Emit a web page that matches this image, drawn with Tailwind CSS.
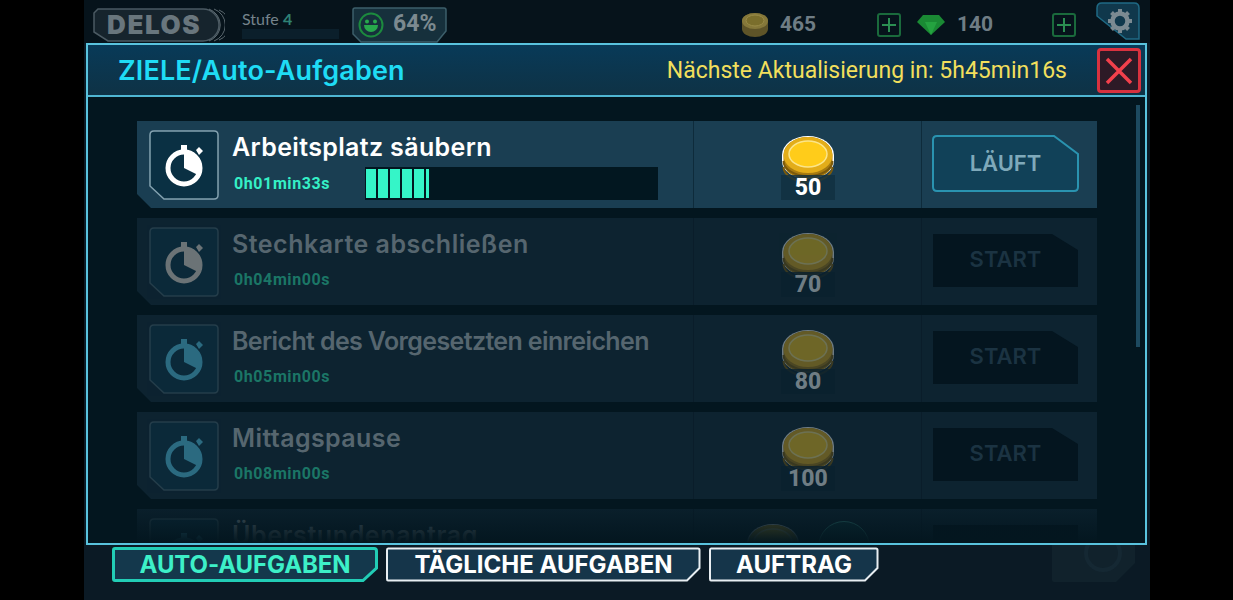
<!DOCTYPE html>
<html lang="de">
<head>
  <meta charset="UTF-8">
  <meta name="viewport" content="width=device-width, initial-scale=1.0">
  <title>Ziele / Auto-Aufgaben</title>
  <script src="https://cdn.jsdelivr.net/npm/@tailwindcss/browser@4"></script>
</head>
<body class="bg-black w-[1233px] h-[600px] overflow-hidden font-[Inter]">
  <!-- shared icons -->
  <svg class="hidden">
    <symbol id="watch" viewBox="0 0 70 70">
      <path d="M1 5 Q1 1 5 1 H65 Q69 1 69 5 V65 Q69 69 65 69 H15 L1 56 Z" fill="#0a3043" stroke="currentColor" stroke-opacity=".75" stroke-width="1.5"/>
    </symbol>
    <symbol id="stopwatch" viewBox="0 0 70 70">
      <circle cx="35" cy="38" r="16" fill="none" stroke="currentColor" stroke-width="5"/>
      <path d="M35 38 V20 A18 18 0 0 1 51 46 Z" fill="currentColor"/>
      <path d="M32 15 H38 V22 H32 Z M47 20 L50 17 L54 21 L50 25 Z" fill="currentColor"/>
    </symbol>
    <symbol id="coin" viewBox="0 0 54 56">
      <path d="M1 20 A26 19 0 0 1 53 20 V26 A26 18 0 0 1 1 26 Z" fill="#fff"/>
      <path d="M2.5 20 A24.5 18 0 0 1 51.5 20 V28 A24.5 16 0 0 1 2.5 28 Z" fill="#a87c10"/>
      <path d="M2.5 26 A24.5 15 0 0 0 51.5 26 M2.5 32 A24.5 15 0 0 0 51.5 32" fill="none" stroke="#7b5a0c" stroke-width="2"/>
      <ellipse cx="27" cy="20" rx="24.5" ry="18" fill="#e3ad19"/>
      <ellipse cx="27" cy="19" rx="19" ry="13" fill="#ffcc1a" stroke="#fbe58a" stroke-width="1.5"/>
    </symbol>
    <symbol id="plus" viewBox="0 0 24 24">
      <rect x="1" y="1" width="22" height="22" rx="2" fill="none" stroke="#1a6a3c" stroke-width="2"/>
      <path d="M12 5 V19 M5 12 H19" stroke="#2b8f52" stroke-width="2"/>
    </symbol>
  </svg>

  <div class="relative ml-[84px] w-[1066px] h-[600px] bg-[#0b1a25] overflow-hidden">
    <!-- dim button behind the panel -->
    <svg class="absolute left-[968px] top-[535px] w-[83px] h-[47px]" viewBox="0 0 83 47" fill="none">
      <path d="M0 0 H83 V28 L64 47 H2 Q0 47 0 45 Z" fill="#11222c"/>
      <circle cx="51" cy="18" r="17" stroke="#152833" stroke-width="4"/>
    </svg>

    <!-- top bar -->
    <div class="h-[43px] flex items-center pt-[6px] bg-[#06131b] relative">
      <div class="relative ml-[9px] mt-[1px] w-[132px] h-[35px]">
        <svg class="absolute inset-0" viewBox="0 0 132 35" fill="none">
          <path d="M1 5 L5 1 H110 A16 16 0 0 1 110 33 H15 L1 24 Z" fill="#16242d" stroke="#4b5a63" stroke-width="1.5"/>
          <path d="M116 1 A17 17 0 0 1 116 33 M121 1 A17 17 0 0 1 121 33 M126 2 A16 16 0 0 1 126 32" stroke="#5b686f" stroke-width="1"/>
        </svg>
        <span class="absolute left-[14px] top-[4px] text-[26px] leading-[26px] font-black tracking-[1.6px] text-[#69767d]">DELOS</span>
      </div>
      <div class="ml-[17px] w-[97px] -mt-[1px]">
        <div class="text-[16px] leading-[18px] text-[#75838b] font-[Lato]">Stufe <span class="font-bold text-[#2f8275]">4</span></div>
        <div class="h-[10px] mt-[1px] bg-[#0b1f2b]"></div>
      </div>
      <div class="relative ml-[13px] w-[95px] h-[36px] flex items-center">
        <svg class="absolute inset-0" viewBox="0 0 95 36" fill="none"><path d="M3 1 H92 Q94 1 94 3 V24 L85 35 H9 L1 27 V3 Q1 1 3 1 Z" fill="#16303c" stroke="#3d5f6b" stroke-width="1.5"/></svg>
        <svg class="relative ml-[6px] w-[26px] h-[26px]" viewBox="0 0 26 26" fill="none">
          <circle cx="13" cy="13" r="11.5" stroke="#1c8a3e" stroke-width="2"/>
          <circle cx="9" cy="9.5" r="2" fill="#27a84c"/>
          <circle cx="17" cy="9.5" r="2" fill="#27a84c"/>
          <path d="M6 13 H20 A7 7 0 0 1 6 13 Z" fill="#27a84c"/>
        </svg>
        <span class="relative ml-[9px] text-[23px] font-bold font-[Roboto] text-[#7c8a90]">64%</span>
      </div>
      <svg class="ml-[294px] w-[28px] h-[26px]" viewBox="0 0 28 26">
        <path d="M1 9 A13 8 0 0 1 27 9 V17 A13 8 0 0 1 1 17 Z" fill="#5e5428"/>
        <ellipse cx="14" cy="9" rx="13" ry="8" fill="#85783a"/>
        <ellipse cx="14" cy="8.5" rx="9" ry="5.5" fill="#7a6e2c" stroke="#9a8c48"/>
      </svg>
      <span class="ml-[11px] mt-[1px] w-[36px] text-[21px] font-bold font-[Roboto] text-[#6f7d85]">465</span>
      <svg class="ml-[61px] w-[24px] h-[24px]"><use href="#plus"/></svg>
      <svg class="ml-[15px] w-[30px] h-[22px]" viewBox="0 0 30 22">
        <path d="M7 1 H23 L29 8 L15 21 L1 8 Z" fill="#1a8a34"/>
        <path d="M9 8 H21 L15 21 Z" fill="#24a340"/>
      </svg>
      <span class="ml-[11px] mt-[1px] w-[35px] text-[21px] font-bold font-[Roboto] text-[#6f7d85]">140</span>
      <svg class="ml-[60px] w-[24px] h-[24px]"><use href="#plus"/></svg>
      <svg class="ml-[20px] -mt-[7px] w-[44px] h-[38px]" viewBox="0 0 44 38">
        <path d="M1 6 Q1 1 6 1 H38 Q43 1 43 6 V37 H30 L1 14 Z" fill="#10384c" stroke="#1f6a85" stroke-width="1.5"/>
        <path d="M24 7 V31 M12 19 H36 M15.5 10.5 L32.5 27.5 M32.5 10.5 L15.5 27.5" stroke="#7b8a92" stroke-width="4"/>
        <circle cx="24" cy="19" r="7.5" fill="#10384c" stroke="#7b8a92" stroke-width="4.5"/>
      </svg>
    </div>

    <!-- panel -->
    <div class="relative mx-[2px] w-[1061px] h-[502px] border-2 border-[#59c3de] bg-[#03161f] overflow-hidden">
      <div class="h-[52px] border-b-2 border-[#4fb6d2] bg-gradient-to-b from-[#083a58] to-[#0e3245] flex items-center">
        <h1 class="ml-[30px] mt-[3px] text-[27px] font-semibold text-[#1fdcf5] tracking-[0.15px]">ZIELE/Auto-Aufgaben</h1>
        <span class="ml-auto mt-[3px] text-[23px] font-[Roboto] text-[#f2df5c]">Nächste Aktualisierung in: 5h45min16s</span>
        <button class="ml-[30px] mr-[4px] mt-[1px] w-[44px] h-[45px] rounded-[4px] border-[3px] border-[#d8323f] bg-[#2d1a26] flex items-center justify-center">
          <svg class="w-[30px] h-[30px]" viewBox="0 0 30 30"><path d="M3 3 L27 27 M27 3 L3 27" stroke="#f2404c" stroke-width="3.5"/></svg>
        </button>
      </div>

      <div class="relative pt-[24px] pl-[49px] flex flex-col gap-[10px] w-[1009px]">
        <!-- active row -->
        <div class="shrink-0 h-[87px] grid grid-cols-[557px_228px_175px] bg-[#1a3e52] [clip-path:polygon(0_0,100%_0,100%_100%,14px_100%,0_calc(100%-14px))]">
          <div class="relative flex pl-[12px] pt-[9px] border-r border-[#0e2b3b]">
            <div class="relative w-[70px] h-[70px] text-[#a9c6d2]">
              <svg class="absolute inset-0 w-[70px] h-[70px]"><use href="#watch"/></svg>
              <svg class="absolute inset-0 w-[70px] h-[70px] text-white"><use href="#stopwatch"/></svg>
            </div>
            <div class="ml-[13px] flex-1">
              <div class="text-[25px] leading-[34px] font-semibold tracking-[0.35px] text-white">Arbeitsplatz säubern</div>
              <div class="flex items-center mt-[3px]">
                <span class="ml-[2px] w-[131px] text-[16px] font-bold font-[Roboto] tracking-[0.6px] text-[#35f0c6]">0h01min33s</span>
                <div class="w-[293px] h-[33px] bg-[#021720] flex items-stretch gap-[2px] py-[2px] pl-[1px]">
                  <div class="w-[10px] bg-[#35f5c8]"></div>
                  <div class="w-[10px] bg-[#35f5c8]"></div>
                  <div class="w-[10px] bg-[#35f5c8]"></div>
                  <div class="w-[10px] bg-[#35f5c8]"></div>
                  <div class="w-[10px] bg-[#35f5c8]"></div>
                  <div class="w-[3px] bg-[#35f5c8]"></div>
                </div>
              </div>
            </div>
          </div>
          <div class="relative flex justify-center border-r border-[#0e2b3b]">
            <svg class="mt-[14px] w-[54px] h-[56px]"><use href="#coin"/></svg>
            <div class="absolute left-[87px] top-[54px] w-[54px] h-[25px] bg-[#102f40]/80 text-center text-[23px] leading-[26px] font-extrabold font-[Roboto] text-white">50</div>
          </div>
          <div class="pl-[10px] pt-[14px]">
            <button class="relative w-[147px] h-[57px]">
              <svg class="absolute inset-0" viewBox="0 0 147 57" fill="none"><path d="M5 1 H122 L146 19 V52 Q146 56 142 56 H5 Q1 56 1 52 V5 Q1 1 5 1 Z" fill="#114158" stroke="#2a93b0" stroke-width="2"/></svg>
              <span class="relative text-[22px] font-semibold text-[#7fa9ba]">LÄUFT</span>
            </button>
          </div>
        </div>

        <!-- waiting rows -->
        <div class="shrink-0 h-[87px] grid grid-cols-[557px_228px_175px] bg-[#0d2330] [clip-path:polygon(0_0,100%_0,100%_100%,14px_100%,0_calc(100%-14px))]">
          <div class="relative flex pl-[12px] pt-[9px] border-r border-[#0a1d2a]">
            <div class="relative w-[70px] h-[70px] text-[#4d6873]">
              <svg class="absolute inset-0 w-[70px] h-[70px] opacity-50"><use href="#watch"/></svg>
              <svg class="absolute inset-0 w-[70px] h-[70px] text-[#6b7376]"><use href="#stopwatch"/></svg>
            </div>
            <div class="ml-[13px]">
              <div class="text-[25px] leading-[34px] font-semibold tracking-[0.5px] text-[#56666f]">Stechkarte abschließen</div>
              <div class="ml-[2px] mt-[2px] text-[16px] leading-[33px] font-bold font-[Roboto] tracking-[0.6px] text-[#1b7666]">0h04min00s</div>
            </div>
          </div>
          <div class="relative flex justify-center border-r border-[#0a1d2a]">
            <svg class="mt-[14px] w-[54px] h-[56px] opacity-40"><use href="#coin"/></svg>
            <div class="absolute left-[87px] top-[54px] w-[54px] h-[25px] bg-[#0a212e]/80 text-center text-[23px] leading-[26px] font-extrabold font-[Roboto] text-[#6f7d84]">70</div>
          </div>
          <div class="pl-[11px] pt-[16px]">
            <button class="w-[145px] h-[53px] pb-[2px] bg-[#04151f] text-[22px] font-semibold text-[#1b3342] [clip-path:polygon(0_0,119px_0,100%_16px,100%_100%,0_100%)]">START</button>
          </div>
        </div>

        <div class="shrink-0 h-[87px] grid grid-cols-[557px_228px_175px] bg-[#0d2330] [clip-path:polygon(0_0,100%_0,100%_100%,14px_100%,0_calc(100%-14px))]">
          <div class="relative flex pl-[12px] pt-[9px] border-r border-[#0a1d2a]">
            <div class="relative w-[70px] h-[70px] text-[#4d6873]">
              <svg class="absolute inset-0 w-[70px] h-[70px] opacity-50"><use href="#watch"/></svg>
              <svg class="absolute inset-0 w-[70px] h-[70px] text-[#2b6a80]"><use href="#stopwatch"/></svg>
            </div>
            <div class="ml-[13px]">
              <div class="text-[25px] leading-[34px] font-semibold tracking-[-0.63px] text-[#56666f]">Bericht des Vorgesetzten einreichen</div>
              <div class="ml-[2px] mt-[2px] text-[16px] leading-[33px] font-bold font-[Roboto] tracking-[0.6px] text-[#1b7666]">0h05min00s</div>
            </div>
          </div>
          <div class="relative flex justify-center border-r border-[#0a1d2a]">
            <svg class="mt-[14px] w-[54px] h-[56px] opacity-40"><use href="#coin"/></svg>
            <div class="absolute left-[87px] top-[54px] w-[54px] h-[25px] bg-[#0a212e]/80 text-center text-[23px] leading-[26px] font-extrabold font-[Roboto] text-[#6f7d84]">80</div>
          </div>
          <div class="pl-[11px] pt-[16px]">
            <button class="w-[145px] h-[53px] pb-[2px] bg-[#04151f] text-[22px] font-semibold text-[#1b3342] [clip-path:polygon(0_0,119px_0,100%_16px,100%_100%,0_100%)]">START</button>
          </div>
        </div>

        <div class="shrink-0 h-[87px] grid grid-cols-[557px_228px_175px] bg-[#0d2330] [clip-path:polygon(0_0,100%_0,100%_100%,14px_100%,0_calc(100%-14px))]">
          <div class="relative flex pl-[12px] pt-[9px] border-r border-[#0a1d2a]">
            <div class="relative w-[70px] h-[70px] text-[#4d6873]">
              <svg class="absolute inset-0 w-[70px] h-[70px] opacity-50"><use href="#watch"/></svg>
              <svg class="absolute inset-0 w-[70px] h-[70px] text-[#2b6a80]"><use href="#stopwatch"/></svg>
            </div>
            <div class="ml-[13px]">
              <div class="text-[25px] leading-[34px] font-semibold tracking-[0.4px] text-[#56666f]">Mittagspause</div>
              <div class="ml-[2px] mt-[2px] text-[16px] leading-[33px] font-bold font-[Roboto] tracking-[0.6px] text-[#1b7666]">0h08min00s</div>
            </div>
          </div>
          <div class="relative flex justify-center border-r border-[#0a1d2a]">
            <svg class="mt-[14px] w-[54px] h-[56px] opacity-40"><use href="#coin"/></svg>
            <div class="absolute left-[87px] top-[54px] w-[54px] h-[25px] bg-[#0a212e]/80 text-center text-[23px] leading-[26px] font-extrabold font-[Roboto] text-[#6f7d84]">100</div>
          </div>
          <div class="pl-[11px] pt-[16px]">
            <button class="w-[145px] h-[53px] pb-[2px] bg-[#04151f] text-[22px] font-semibold text-[#1b3342] [clip-path:polygon(0_0,119px_0,100%_16px,100%_100%,0_100%)]">START</button>
          </div>
        </div>

        <div class="shrink-0 h-[87px] grid grid-cols-[557px_228px_175px] bg-[#0d2330]">
          <div class="relative flex pl-[12px] pt-[9px] border-r border-[#0a1d2a]">
            <div class="relative w-[70px] h-[70px] text-[#4d6873]">
              <svg class="absolute inset-0 w-[70px] h-[70px] opacity-50"><use href="#watch"/></svg>
              <svg class="absolute inset-0 w-[70px] h-[70px] text-[#2b6a80]"><use href="#stopwatch"/></svg>
            </div>
            <div class="ml-[13px]">
              <div class="text-[25px] leading-[34px] font-semibold tracking-[0.6px] text-[#56666f]">Überstundenantrag</div>
            </div>
          </div>
          <div class="relative flex justify-center gap-[18px] border-r border-[#0a1d2a]">
            <svg class="mt-[14px] w-[54px] h-[56px] opacity-40"><use href="#coin"/></svg>
            <div class="mt-[12px] w-[52px] h-[52px] rounded-full border border-[#2b6a6a] bg-[#0c3038]"></div>
          </div>
          <div class="pl-[11px] pt-[16px]">
            <div class="w-[145px] h-[53px] bg-[#04151f]"></div>
          </div>
        </div>
      </div>

      <!-- fades the cut-off row, scrollbar over the list -->
      <div class="absolute left-0 right-0 bottom-0 h-[44px] bg-gradient-to-b from-[#03161f]/10 to-[#03161f]"></div>
      <div class="absolute left-[1048px] top-[60px] w-[4px] h-[242px] bg-[#1d4a60]"></div>
    </div>

    <!-- tabs -->
    <div class="relative flex gap-[8px] pl-[28px] pt-[2px]">
      <button class="relative w-[266px] h-[35px] text-[24px] font-bold tracking-[-0.1px] text-[#3df0c8]">
        <svg class="absolute inset-0" viewBox="0 0 266 35" fill="none"><path d="M3 1.5 H262 Q264.5 1.5 264.5 4 V21 L251 33.5 H3 Q1.5 33.5 1.5 32 V3 Q1.5 1.5 3 1.5 Z" fill="#14384c" stroke="#22cdb6" stroke-width="3"/></svg>
        <span class="relative">AUTO-AUFGABEN</span>
      </button>
      <button class="relative w-[315px] h-[35px] text-[24px] font-bold text-white">
        <svg class="absolute inset-0" viewBox="0 0 315 35" fill="none"><path d="M2 1.5 H312 Q313.5 1.5 313.5 3 V21 L301 33.5 H2 Q1 33.5 1 32 V3 Q1 1.5 2 1.5 Z" fill="#15354a" stroke="#e8eef2" stroke-width="2"/></svg>
        <span class="relative">TÄGLICHE AUFGABEN</span>
      </button>
      <button class="relative w-[170px] h-[35px] text-[24px] font-bold text-white">
        <svg class="absolute inset-0" viewBox="0 0 170 35" fill="none"><path d="M2 1.5 H167 Q168.5 1.5 168.5 3 V21 L156 33.5 H2 Q1 33.5 1 32 V3 Q1 1.5 2 1.5 Z" fill="#15354a" stroke="#e8eef2" stroke-width="2"/></svg>
        <span class="relative">AUFTRAG</span>
      </button>
    </div>
  </div>
</body>
</html>
